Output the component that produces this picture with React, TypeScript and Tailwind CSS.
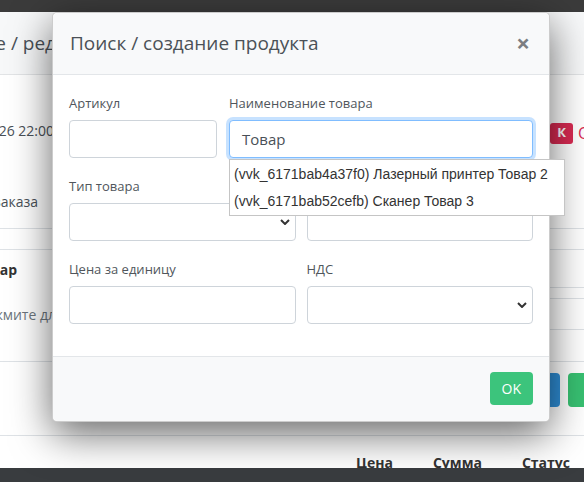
import React from "react";

const SANS = { fontFamily: '"Open Sans", "Noto Sans", sans-serif' };
const ARIAL = { fontFamily: '"Liberation Sans", Arial, sans-serif' };

function Chevron() {
  return (
    <svg width="10" height="6" viewBox="0 0 10 6" className="text-[#333]">
      <path d="M1 1l4 4 4-4" fill="none" stroke="currentColor" strokeWidth="2" />
    </svg>
  );
}

function Field({ label, children }: { label: string; children: React.ReactNode }) {
  return (
    <div className="mb-4">
      <div className="h-6 leading-6 text-[13px] text-[#50565c] mb-[5px]">{label}</div>
      {children}
    </div>
  );
}

function TextInput() {
  return <div className="h-[38px] rounded-[4px] border border-[#ced4da] bg-white" />;
}

function SelectBox() {
  return (
    <div className="h-[38px] rounded-[4px] border border-[#ced4da] bg-white flex items-center justify-end pr-[5px]">
      <Chevron />
    </div>
  );
}

// page behind the modal, only the edges are visible
function BackRow({
  h,
  left,
  right,
  className = "",
}: {
  h: string;
  left?: React.ReactNode;
  right?: React.ReactNode;
  className?: string;
}) {
  return (
    <div className={`flex items-center justify-between ${h} ${className}`}>
      <div className="w-[52px] h-full overflow-hidden flex items-center justify-end">{left}</div>
      <div className="w-[34px] h-full overflow-hidden flex items-center">{right}</div>
    </div>
  );
}

export default function App() {
  return (
    <div className="relative w-[584px] h-[482px] overflow-hidden bg-white text-[#495057]" style={SANS}>
      <div className="h-[12px] bg-[#3b3b3b]" />
      <BackRow
        h="h-[63px]"
        className="bg-[#f7f8f9] border-b border-[#e2e4e6]"
        left={<span className="text-[19px] whitespace-nowrap shrink-0 -mr-[4px]">Создание / ред</span>}
      />
      <div className="h-[35px]" />
      <BackRow
        h="h-[40px]"
        left={<span className="text-[14px] whitespace-nowrap shrink-0 -mr-[2px]">2021-04-26 22:00</span>}
        right={
          <div className="flex items-center gap-[5px] mt-[6px] shrink-0">
            <span className="w-[23px] h-[21px] rounded-[3px] bg-[#d92a52] text-white text-[13px] font-bold flex items-center justify-center">
              К
            </span>
            <span className="text-[#d92a52] text-[16px]">Отменён</span>
          </div>
        }
      />
      <div className="h-[30px]" />
      <BackRow
        h="h-[42px]"
        left={<span className="text-[14px] whitespace-nowrap shrink-0 pr-[14px]">Номер заказа</span>}
      />
      <div className="h-[6px]" />
      <BackRow h="h-[22px]" className="border-y border-[#dee2e6]" />
      <BackRow
        h="h-[38px]"
        left={<span className="text-[14px] font-bold text-[#333] whitespace-nowrap shrink-0 mr-[35px]">Товар</span>}
        right={<div className="w-full h-full border-b border-[#dee2e6]" />}
      />
      <BackRow
        h="h-[11px]"
        right={<div className="w-full h-full border-b border-[#dee2e6]" />}
      />
      <BackRow
        h="h-[31px]"
        left={<span className="text-[14px] text-[#6c757d] whitespace-nowrap shrink-0 -mr-[4px]">Нажмите дл</span>}
        right={<div className="w-full h-full border-b border-[#dee2e6]" />}
      />
      <div className="h-[32px] border-b border-[#dee2e6]" />
      <BackRow
        h="h-[74px]"
        className="border-b border-[#dee2e6]"
        right={
          <div className="flex gap-[8px] shrink-0 -ml-[30px] -mt-[17px]">
            <div className="w-[40px] h-[34px] rounded-[4px] bg-[#2f8fd8]" />
            <div className="w-[40px] h-[34px] rounded-[4px] bg-[#38c172]" />
          </div>
        }
      />
      <div className="h-[32px] flex items-end gap-[40px] pl-[356px] overflow-hidden">
        <span className="text-[14px] leading-5 font-bold text-[#333] translate-y-[5px]">Цена</span>
        <span className="text-[14px] leading-5 font-bold text-[#333] translate-y-[5px]">Сумма</span>
        <span className="text-[14px] leading-5 font-bold text-[#333] translate-y-[5px]">Статус</span>
      </div>
      <div className="relative h-[20px] bg-[#393c3f]" />

      {/* modal */}
      <div className="absolute left-[52px] top-[12px] w-[498px] rounded-[5px] bg-white border border-black/20 shadow-[0_12px_40px_rgba(0,0,0,0.6)]">
        <div className="h-[62px] px-4 flex items-center justify-between bg-[#f8f9fa] border-b border-[#e3e6e9] rounded-t-[5px]">
          <div className="text-[19px] text-[#4b5157] pl-px">Поиск / создание продукта</div>
          <div className="text-[24px] font-bold text-[#7b7e82] pr-[3px] leading-none -mt-[1px]">×</div>
        </div>

        <div className="px-4 pt-4 pb-4">
          <div className="grid grid-cols-[148px_1fr] gap-x-[12px]">
            <Field label="Артикул">
              <TextInput />
            </Field>
            <Field label="Наименование товара">
              <div className="relative">
                <div className="h-[38px] rounded-[4px] border border-[#80bdff] bg-white shadow-[0_0_0_3px_rgba(0,123,255,0.22)] flex items-center pl-[12px] text-[15px] text-[#495057]">
                  Товар
                </div>
                <div
                  className="absolute left-0 top-[39px] w-[336px] z-10 bg-white border border-[#c5c5c5] py-[1px] text-[14px] text-[#333]"
                  style={ARIAL}
                >
                  <div className="h-[27px] flex items-center pl-[4px] whitespace-nowrap">
                    (vvk_6171bab4a37f0) Лазерный принтер Товар 2
                  </div>
                  <div className="h-[26px] flex items-center pl-[4px] whitespace-nowrap">
                    (vvk_6171bab52cefb) Сканер Товар 3
                  </div>
                </div>
              </div>
            </Field>
          </div>

          <div className="grid grid-cols-2 gap-x-[11px]">
            <Field label="Тип товара">
              <SelectBox />
            </Field>
            <Field label="Единица измерения">
              <TextInput />
            </Field>
            <Field label="Цена за единицу">
              <TextInput />
            </Field>
            <Field label="НДС">
              <SelectBox />
            </Field>
          </div>
        </div>

        <div className="h-[65px] px-4 flex items-center justify-end bg-[#f8f9fa] border-t border-[#e3e6e9] rounded-b-[5px]">
          <button className="h-[33px] px-[12px] rounded-[4px] bg-[#3cc47c] text-white text-[14px] -mt-[1px]">OK</button>
        </div>
      </div>
    </div>
  );
}
